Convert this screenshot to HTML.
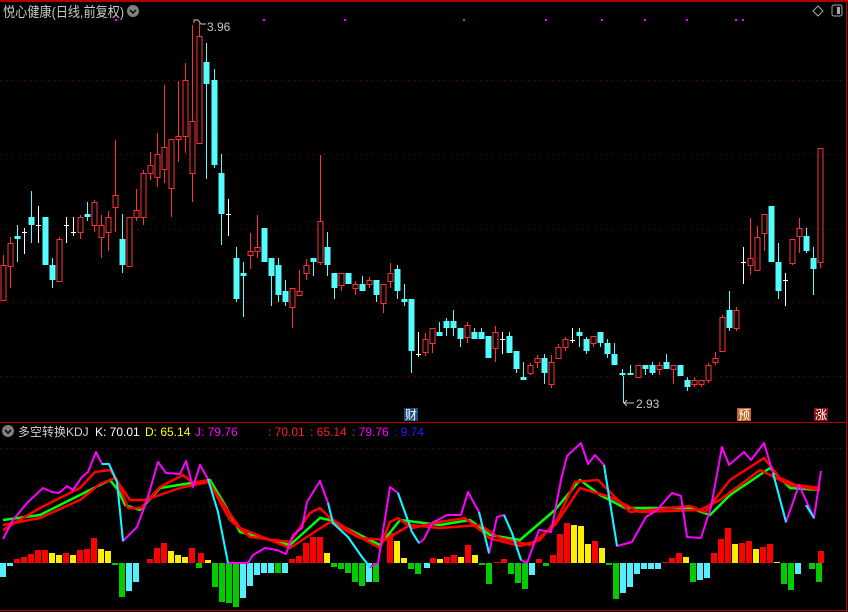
<!DOCTYPE html>
<html><head><meta charset="utf-8"><style>
html,body{margin:0;padding:0;background:#000;width:848px;height:612px;overflow:hidden}
svg{display:block}
text{font-family:"Liberation Sans","Noto Sans CJK SC",sans-serif}
</style></head><body>
<svg id="s" width="848" height="612" xmlns="http://www.w3.org/2000/svg">
<rect width="848" height="612" fill="#000"/>
<line x1="0" y1="1" x2="848" y2="1" stroke="#b00000" stroke-width="2"/>
<line x1="846.5" y1="0" x2="846.5" y2="612" stroke="#b00000"/>
<line x1="0" y1="422.5" x2="846" y2="422.5" stroke="#b00000"/>
<line x1="0" y1="610.5" x2="846" y2="610.5" stroke="#b00000"/>
<g stroke="#8a0000" stroke-dasharray="1,5">
<line x1="0" y1="80.5" x2="846" y2="80.5"/><line x1="0" y1="154.5" x2="846" y2="154.5"/>
<line x1="0" y1="229.5" x2="846" y2="229.5"/><line x1="0" y1="302.5" x2="846" y2="302.5"/>
<line x1="0" y1="376.5" x2="846" y2="376.5"/>
<line x1="0" y1="448.5" x2="846" y2="448.5"/><line x1="0" y1="506.5" x2="846" y2="506.5"/>
</g>
<text x="3" y="17" fill="#c8c8c8" font-size="14" textLength="121" lengthAdjust="spacingAndGlyphs">悦心健康(日线,前复权)</text>
<circle cx="133" cy="11" r="6" fill="#808080"/>
<path d="M130 10l3 3 3-3" stroke="#000" fill="none" stroke-width="1.5"/>
<path d="M818 6l5 5-5 5-5-5z" stroke="#aaa" fill="none"/>
<rect x="832" y="5" width="10" height="11" rx="2" stroke="#aaa" fill="none"/><rect x="837" y="7" width="3" height="7" fill="#aaa"/>
<g fill="#ff00ff"><rect x="115" y="19" width="2" height="2"/><rect x="263" y="19" width="2" height="2"/><rect x="344" y="19" width="2" height="2"/><rect x="463" y="19" width="2" height="2"/><rect x="545" y="19" width="2" height="2"/><rect x="601" y="19" width="2" height="2"/><rect x="644" y="19" width="2" height="2"/><rect x="686" y="19" width="2" height="2"/><rect x="735" y="19" width="2" height="2"/><rect x="742" y="19" width="2" height="2"/></g>
<g id="c"></g>
<path d="M194 23v-3h4l3 4h5" stroke="#c8c8c8" fill="none"/>
<text x="207" y="31" fill="#c8c8c8" font-size="12">3.96</text>
<line x1="623.5" y1="376" x2="623.5" y2="403" stroke="#54fcfc"/>
<path d="M627 400l-3 3 3 3M624 403h10" stroke="#c8c8c8" fill="none"/>
<text x="636" y="408" fill="#c8c8c8" font-size="12">2.93</text>
<rect x="404" y="408" width="14" height="13" fill="#1e4b82"/><text x="405" y="419" fill="#fff" font-size="12">财</text>
<rect x="737" y="408" width="14" height="13" fill="#c0661e"/><text x="738" y="419" fill="#fff" font-size="12">预</text>
<rect x="814" y="408" width="14" height="13" fill="#8b1010"/><text x="815" y="419" fill="#fff" font-size="12">涨</text>
<circle cx="8" cy="431" r="6" fill="#808080"/><path d="M5 430l3 3 3-3" stroke="#000" fill="none" stroke-width="1.5"/>
<text y="436" font-size="12"><tspan x="18" fill="#d0d0d0">多空转换KDJ</tspan><tspan x="95" fill="#fff">K: 70.01</tspan><tspan x="145" fill="#ffff00">D: 65.14</tspan><tspan x="195" fill="#ff00ff">J: 79.76</tspan><tspan x="268" fill="#ff2020">: 70.01</tspan><tspan x="310" fill="#ff2020">: 65.14</tspan><tspan x="352" fill="#ff00ff">: 79.76</tspan><tspan x="394" fill="#2020ff">: 9.74</tspan></text>
<g id="b"></g>
<g fill="none" stroke-linejoin="round">
<polyline stroke="#00ff00" stroke-width="2.5" points="3,520 40,515 80,495 110,480 118,490 125,505 140,510 160,488 210,480 225,505 240,532 290,545 320,518 330,520 350,530 380,545 400,520 440,525 470,520 490,535 520,540 555,510 580,480 600,495 625,508 690,508 710,515 730,495 770,468 790,488 820,490"/>
<polyline stroke="#ff0000" stroke-width="2.5" points="3,530 40,508 80,488 95,472 110,470 117,480 128,508 141,508 160,487 183,475 193,483 208,480 230,520 250,537 290,542 310,513 320,508 330,518 365,540 380,548 390,522 398,518 412,528 440,522 465,518 480,530 489,538 520,546 540,540 558,518 575,482 598,480 610,492 630,512 690,506 705,512 730,480 764,458 780,478 796,485 820,488"/>
<polyline stroke="#ff0000" stroke-width="2.5" points="3,525 40,518 80,500 100,484 115,478 130,500 145,500 180,488 208,482 240,528 290,548 330,522 360,538 385,540 410,525 440,528 480,525 500,538 530,545 555,525 580,488 610,497 640,512 700,510 720,500 760,470 790,485 820,490"/>
<polyline stroke="#ff00ff" stroke-width="2" points="3,539 13,520 27,503 43,488 52,492 59,493 67,486 73,490 82,477 88,472 96,452 102,464 109,464 117,482 123,541 137,527 147,500 158,462 166,473 180,474 186,461 193,487 200,465 208,479 218,512 228,563 248,563 253,555 265,548 277,550 286,554 293,535 302,528 307,502 320,481 328,503 333,523 348,537 362,557 370,567 378,563 390,487 398,493 412,532 419,543 424,539 432,523 447,515 461,515 468,492 479,512 489,553 497,517 504,515 512,533 521,560 527,563 539,530 551,532 561,480 567,456 581,443 588,464 595,455 604,465 617,546 632,542 646,517 657,510 672,493 681,496 687,537 701,538 711,507 722,447 729,465 744,452 751,460 764,443 773,473 786,522 799,485 814,518 821,471"/>
<g stroke="#00ffff" stroke-width="2"><polyline points="102,464 109,464 117,482 123,541"/><polyline points="208,479 218,512 228,563"/><polyline points="328,503 333,523 348,537 362,557 370,567"/><polyline points="398,493 412,532 419,543"/><polyline points="479,512 489,553"/><polyline points="504,515 512,533 521,560"/><polyline points="604,465 617,546"/><polyline points="773,473 786,522"/><polyline points="814,518 806,505"/></g>
</g>
</svg>
<script>
var C=[[3,'r',265,300,255,300],[10,'r',243,266,237,288],[17,'c',236,239,225,262],[24,'w',232,232,228,254],[31,'c',217,225,191,243],[38,'w',225,225,206,243],[45,'c',217,265,217,265],[52,'c',265,280,258,288],[59,'r',239,281,237,281],[66,'w',225,225,217,243],[73,'w',232,232,217,236],[80,'r',217,232,215,239],[87,'c',214,217,202,221],[94,'r',202,225,200,232],[101,'r',225,237,215,258],[108,'r',217,232,211,251],[115,'r',195,207,140,232],[122,'c',239,265,214,273],[129,'r',217,266,217,266],[136,'r',210,217,189,221],[143,'r',173,217,170,225],[150,'r',165,173,152,180],[157,'r',154,177,133,187],[164,'r',147,169,85,183],[171,'r',139,188,139,217],[178,'r',136,139,81,162],[185,'r',80,136,63,153],[192,'r',121,173,25,202],[199,'r',36,143,23,143],[206,'c',62,84,43,179],[214,'c',80,165,69,168],[221,'c',173,214,154,245],[228,'w',214,214,199,236],[236,'c',258,299,247,302],[243,'c',273,276,262,317],[250,'r',251,255,233,269],[257,'r',247,251,215,258],[264,'c',228,262,228,262],[271,'c',258,276,258,306],[278,'c',265,295,258,302],[285,'c',291,302,280,306],[292,'r',288,307,288,328],[299,'r',291,295,270,295],[306,'r',265,273,259,280],[313,'c',258,262,258,276],[320,'r',221,262,155,265],[327,'c',247,265,232,276],[334,'c',273,288,273,299],[341,'r',273,285,273,291],[348,'c',273,284,273,284],[355,'r',284,288,281,295],[362,'c',284,291,276,291],[369,'r',280,284,277,288],[376,'c',280,295,280,302],[383,'r',284,303,284,313],[390,'r',273,281,263,288],[397,'c',269,291,265,299],[404,'c',299,302,284,306],[411,'c',299,351,299,373],[418,'w',354,354,332,357],[425,'r',339,352,333,356],[432,'r',328,343,328,353],[439,'c',332,336,322,336],[446,'c',321,328,318,336],[453,'c',321,328,310,336],[460,'c',328,339,328,347],[467,'r',325,337,322,343],[474,'c',332,339,328,339],[481,'c',332,339,328,339],[488,'c',336,358,336,358],[495,'r',332,348,326,362],[502,'w',339,339,332,354],[509,'c',336,353,332,353],[516,'c',351,369,351,373],[523,'c',377,380,362,380],[530,'r',365,373,363,375],[537,'r',358,362,355,368],[544,'c',358,373,354,384],[551,'r',362,384,355,388],[558,'r',347,358,344,358],[565,'r',339,347,337,351],[572,'w',340,340,328,343],[579,'c',332,336,328,347],[586,'c',339,351,337,354],[593,'r',336,343,336,347],[600,'c',332,343,332,347],[607,'c',343,354,339,358],[614,'c',354,365,343,365],[622,'c',373,375,369,376],[630,'c',373,375,365,375],[638,'r',365,377,365,377],[645,'c',365,369,365,375],[652,'c',365,373,362,375],[659,'r',365,369,362,375],[666,'c',362,369,354,369],[673,'r',365,369,365,384],[680,'c',365,376,365,376],[687,'c',380,387,377,391],[694,'r',380,384,377,387],[701,'r',380,384,380,387],[708,'r',365,380,363,383],[715,'r',358,362,352,365],[722,'r',317,351,315,351],[729,'c',310,328,291,331],[736,'r',310,328,307,331],[743,'w',262,262,247,284],[750,'r',258,265,218,275],[757,'r',237,270,226,270],[764,'r',214,233,214,251],[771,'c',206,262,206,262],[778,'c',262,291,243,299],[785,'w',280,280,273,306],[792,'r',239,263,239,265],[799,'r',228,236,218,253],[806,'c',236,251,228,253],[813,'c',258,269,247,295],[820,'r',148,262,148,268]];
var g=document.getElementById('c'),h='';
C.forEach(function(d){var x=d[0],col=d[1]=='r'?'#ff3232':d[1]=='c'?'#54fcfc':'#ffffff';
h+='<line x1="'+(x+.5)+'" y1="'+d[4]+'" x2="'+(x+.5)+'" y2="'+d[5]+'" stroke="'+col+'"/>';
if(d[1]=='w')h+='<line x1="'+(x-2)+'" y1="'+(d[2]+.5)+'" x2="'+(x+3)+'" y2="'+(d[2]+.5)+'" stroke="#fff"/>';
else if(d[1]=='r')h+='<rect x="'+(x-2)+'" y="'+(d[2]+.5)+'" width="5" height="'+Math.max(d[3]-d[2],1)+'" fill="#000" stroke="'+col+'"/>';
else h+='<rect x="'+(x-2.5)+'" y="'+d[2]+'" width="6" height="'+Math.max(d[3]-d[2],2)+'" fill="'+col+'"/>';});
g.innerHTML=h;
var B=[[0,'c',-14],[7,'c',-3],[14,'r',4],[21,'r',6],[28,'r',9],[35,'r',13],[42,'r',13],[49,'y',10],[56,'y',8],[63,'r',10],[70,'y',8],[77,'r',13],[84,'r',14],[91,'r',25],[98,'y',14],[105,'y',12],[112,'g',-2],[119,'g',-34],[126,'c',-28],[133,'c',-19],[147,'r',4],[154,'r',15],[161,'r',20],[168,'y',12],[175,'y',8],[182,'y',6],[189,'r',15],[196,'g',-5],[198,'r',10],[205,'y',3],[212,'g',-24],[219,'g',-39],[226,'g',-40],[233,'g',-44],[240,'c',-35],[247,'c',-23],[254,'c',-12],[261,'c',-10],[268,'c',-10],[275,'g',-10],[282,'c',-10],[289,'r',4],[296,'r',7],[303,'r',20],[310,'r',26],[317,'r',26],[324,'y',10],[331,'g',-4],[338,'g',-6],[345,'g',-10],[352,'g',-19],[359,'g',-23],[366,'c',-19],[373,'g',-19],[387,'r',30],[394,'y',22],[401,'y',5],[408,'g',-6],[415,'g',-11],[424,'c',-5],[430,'r',5],[437,'y',4],[444,'r',6],[451,'r',8],[458,'y',6],[465,'r',18],[472,'y',8],[479,'g',-2],[486,'g',-21],[494,'r',1],[501,'r',4],[508,'g',-11],[515,'g',-20],[522,'g',-26],[529,'c',-12],[536,'r',4],[543,'g',-3],[550,'r',8],[557,'r',29],[564,'r',40],[571,'y',38],[578,'y',37],[585,'y',19],[592,'r',22],[599,'y',15],[606,'g',-2],[613,'g',-36],[620,'c',-30],[627,'c',-24],[634,'c',-11],[641,'c',-6],[648,'c',-6],[655,'c',-6],[662,'r',1],[669,'r',5],[676,'r',10],[683,'y',6],[690,'g',-19],[697,'c',-17],[704,'c',-15],[711,'r',10],[718,'r',24],[725,'r',35],[732,'y',19],[739,'r',20],[746,'r',22],[753,'y',14],[760,'r',16],[767,'r',19],[774,'y',1],[781,'g',-21],[788,'g',-27],[795,'c',-11],[809,'g',-6],[816,'g',-19],[818,'r',12]];
var cm={r:'#ff0000',y:'#ffee00',g:'#00cc00',c:'#55eeff'};h='';
B.forEach(function(d){var v=d[2];h+='<rect x="'+d[0]+'" y="'+(v>0?563-v:563)+'" width="6" height="'+Math.abs(v)+'" fill="'+cm[d[1]]+'"/>';});
document.getElementById('b').innerHTML=h;
</script>
</body></html>
